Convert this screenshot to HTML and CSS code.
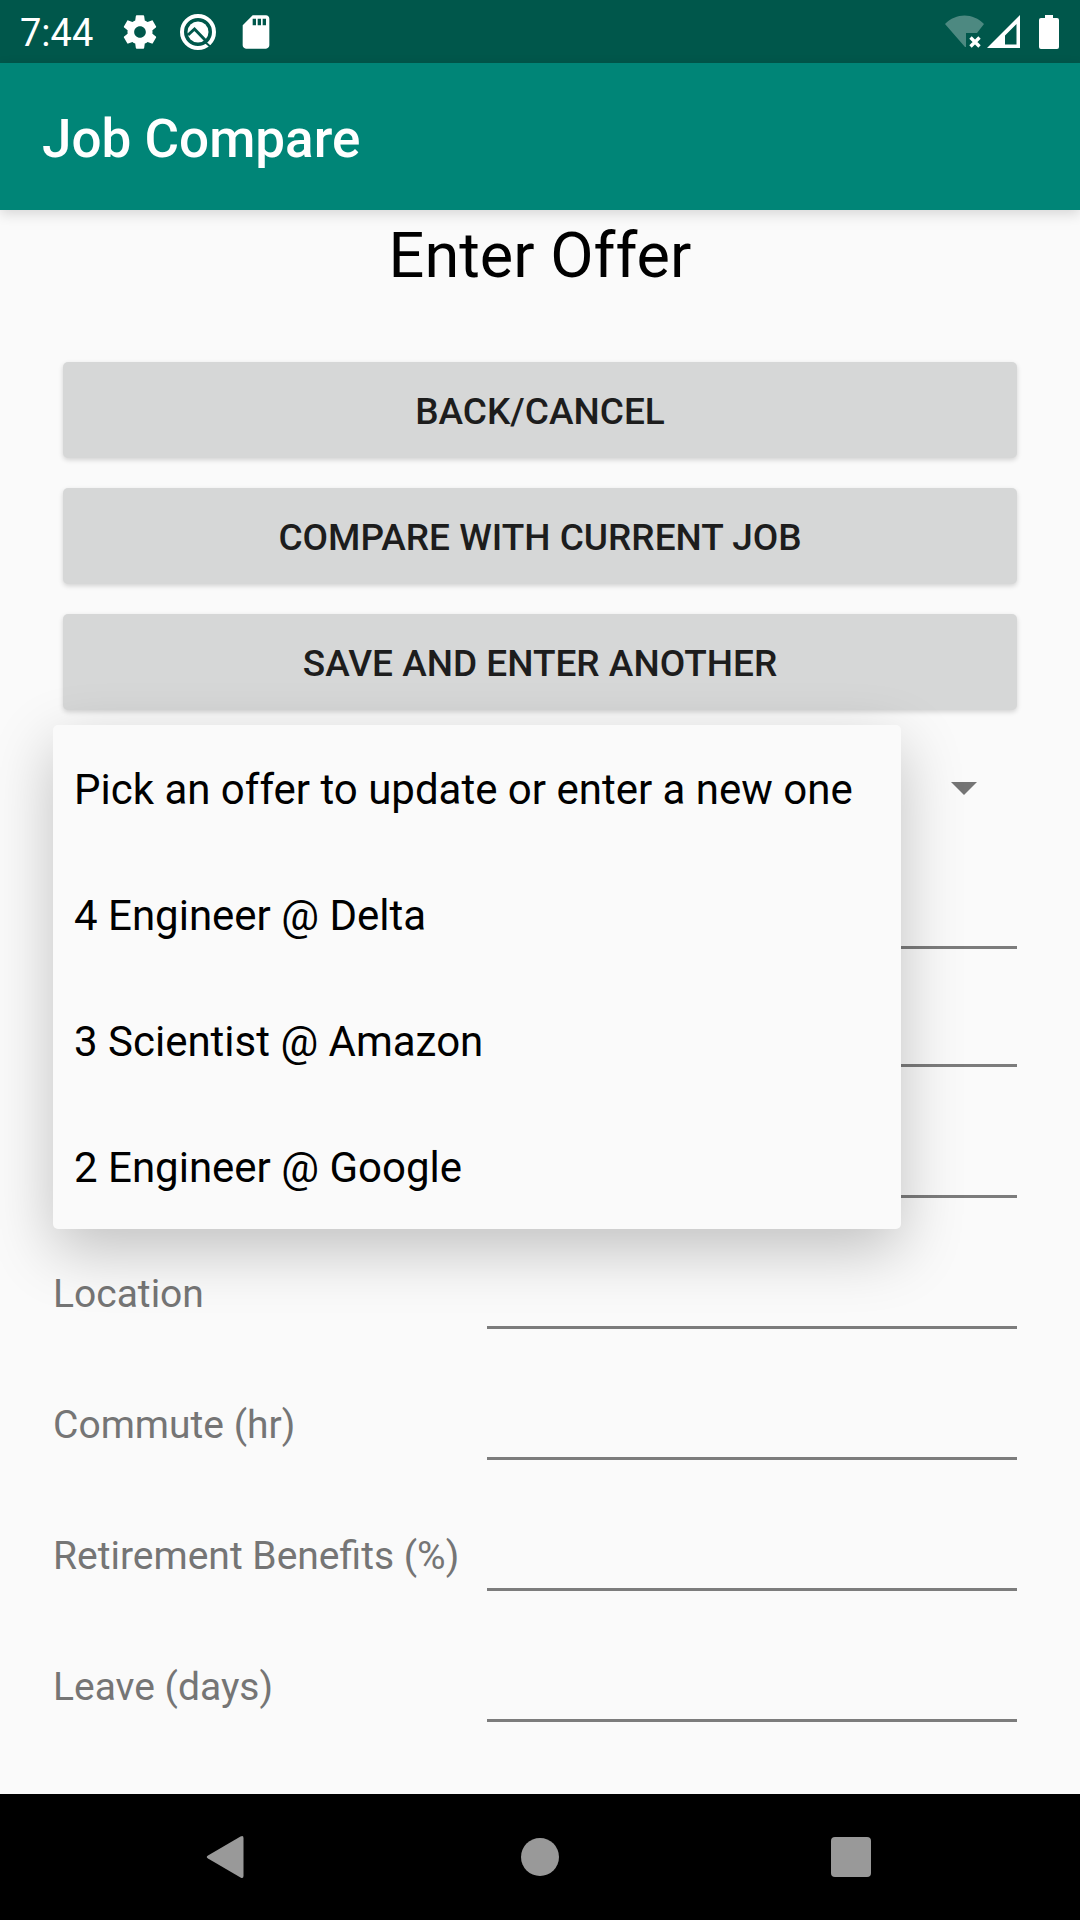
FILE: index.html
```html
<!DOCTYPE html>
<html lang="en">
<head>
<meta charset="utf-8">
<meta name="viewport" content="width=device-width, initial-scale=1">
<title>Job Compare</title>
<link rel="stylesheet" href="styles.css">
</head>
<body>
<div class="status-bar">
  <time class="status-time">7:44</time>
  <div class="status-notifications">
    <svg class="icon" viewBox="0 0 24 24" fill="currentColor" aria-hidden="true"><path d="M19.43 12.98c.04-.32.07-.64.07-.98s-.03-.66-.07-.98l2.11-1.65c.19-.15.24-.42.12-.64l-2-3.46c-.12-.22-.39-.3-.61-.22l-2.49 1c-.52-.4-1.08-.73-1.69-.98l-.38-2.65C14.46 2.18 14.25 2 14 2h-4c-.25 0-.46.18-.49.42l-.38 2.65c-.61.25-1.17.59-1.69.98l-2.49-1c-.23-.09-.49 0-.61.22l-2 3.46c-.13.22-.07.49.12.64l2.11 1.65c-.04.32-.07.65-.07.98s.03.66.07.98l-2.11 1.65c-.19.15-.24.42-.12.64l2 3.46c.12.22.39.3.61.22l2.49-1c.52.4 1.08.73 1.69.98l.38 2.65c.03.24.24.42.49.42h4c.25 0 .46-.18.49-.42l.38-2.65c.61-.25 1.17-.59 1.69-.98l2.49 1c.23.09.49 0 .61-.22l2-3.46c.12-.22.07-.49-.12-.64l-2.11-1.65zM12 15.5c-1.93 0-3.5-1.57-3.5-3.5s1.57-3.5 3.5-3.5 3.5 1.57 3.5 3.5-1.57 3.5-3.5 3.5z"/></svg>
    <svg class="icon" viewBox="0 0 40 40" fill="none" aria-hidden="true"><circle cx="20" cy="20" r="16" stroke="currentColor" stroke-width="4"/><circle cx="20" cy="20" r="10.500" fill="currentColor"/><path class="icon-cut" d="m10 23 6.500-6L29 30" stroke-width="3"/><path class="icon-cut" d="m27 30 8 7" stroke-width="2"/></svg>
    <svg class="icon" viewBox="0 0 24 24" fill="currentColor" aria-hidden="true"><path d="M18 2h-8L4.02 8 4 20c0 1.1.9 2 2 2h12c1.1 0 2-.9 2-2V4c0-1.1-.9-2-2-2zm-6 6h-2V4h2v4zm3 0h-2V4h2v4zm3 0h-2V4h2v4z"/></svg>
  </div>
  <div class="status-system">
    <svg class="icon" viewBox="0 0 40 40" aria-hidden="true"><path d="M0 12C11 .5 28 .5 39 12L32 21H21v14h-1z" fill="currentColor" opacity=".3"/><path d="m25.500 25.500 9 9m0-9-9 9" stroke="currentColor" stroke-width="3.400" fill="none"/></svg>
    <svg class="icon" viewBox="0 0 40 40" fill="currentColor" fill-rule="evenodd" aria-hidden="true"><path d="M0 36 33 3v33zM18 32.500h11.500V12L18 23.500z"/></svg>
    <svg class="icon" viewBox="0 0 40 40" fill="currentColor" aria-hidden="true"><path d="M16 3h8v3h4q2 0 2 2v27q0 2-2 2H12q-2 0-2-2V8q0-2 2-2h4z"/></svg>
  </div>
</div>
<header class="app-bar"><span class="app-title">Job Compare</span></header>
<main class="screen">
  <h1 class="screen-title">Enter Offer</h1>
  <div class="actions">
    <button class="action" type="button">BACK/CANCEL</button>
    <button class="action" type="button">COMPARE WITH CURRENT JOB</button>
    <button class="action" type="button">SAVE AND ENTER ANOTHER</button>
  </div>
  <div class="spinner">
    <select class="spinner-select" aria-label="Offer"></select>
    <svg class="spinner-arrow" viewBox="0 0 26 13" aria-hidden="true"><path d="M0 0h26L13 13z" fill="currentColor"/></svg>
    <div class="menu" role="listbox" aria-label="Offers">
      <button class="menu-item" type="button" role="option">Pick an offer to update or enter a new one</button>
      <button class="menu-item" type="button" role="option">4 Engineer @ Delta</button>
      <button class="menu-item" type="button" role="option">3 Scientist @ Amazon</button>
      <button class="menu-item" type="button" role="option">2 Engineer @ Google</button>
    </div>
  </div>
  <form class="fields">
    <div class="field field-first"><input class="field-input" type="text" aria-label="Title"></div>
    <div class="field field-tight"><input class="field-input" type="text" aria-label="Company"></div>
    <div class="field"><input class="field-input" type="text" aria-label="Salary"></div>
    <div class="field"><label class="field-label" for="location">Location</label><input class="field-input" type="text" id="location"></div>
    <div class="field"><label class="field-label" for="commute">Commute (hr)</label><input class="field-input" type="text" id="commute"></div>
    <div class="field"><label class="field-label" for="retirement">Retirement Benefits (%)</label><input class="field-input" type="text" id="retirement"></div>
    <div class="field"><label class="field-label" for="leave">Leave (days)</label><input class="field-input" type="text" id="leave"></div>
  </form>
</main>
<nav class="nav-bar" aria-label="System">
  <button class="nav-button" type="button" aria-label="Back"><svg class="nav-icon" viewBox="0 0 48 48" fill="currentColor" aria-hidden="true"><path d="M3 22.500 35.500 3.500q3-1.500 3 1.500v38q0 3-3 1.500L3 25.500q-2.500-1.500 0-3z"/></svg></button>
  <button class="nav-button" type="button" aria-label="Home"><svg class="nav-icon" viewBox="0 0 48 48" fill="currentColor" aria-hidden="true"><circle cx="24" cy="24" r="19"/></svg></button>
  <button class="nav-button" type="button" aria-label="Recent apps"><svg class="nav-icon" viewBox="0 0 48 48" fill="currentColor" aria-hidden="true"><rect x="4" y="4" width="40" height="40" rx="4"/></svg></button>
</nav>
</body>
</html>
```
FILE: styles.css
```css
* {
  box-sizing: border-box;
}

body {
  display: flex;
  flex-direction: column;
  min-height: 100vh;
  margin: 0;
  background: #fafafa;
  color: #000;
  font-family: Roboto, "Liberation Sans", sans-serif;
}

button,
input,
select {
  margin: 0;
  padding: 0;
  border: 0;
  border-radius: 0;
  background: none;
  font: inherit;
}

/* System status bar */
.status-bar {
  display: flex;
  align-items: center;
  height: 63px;
  padding: 0 11px 0 20px;
  background: #00574b;
  color: #fff;
}

.status-time {
  padding-top: 2px;
  font-size: 38px;
  line-height: 44px;
}

.status-notifications {
  display: flex;
  gap: 18px;
  margin-left: 27px;
}

.status-system {
  display: flex;
  gap: 2px;
  margin-left: auto;
}

.icon {
  display: block;
  width: 40px;
  height: 40px;
}

.icon-cut {
  stroke: #00574b;
}

/* App bar */
.app-bar {
  display: flex;
  align-items: center;
  height: 147px;
  padding: 4px 42px 0;
  background: #008577;
  color: #fff;
  box-shadow: 0 4px 12px rgba(0, 0, 0, 0.14);
}

.app-title {
  font-size: 53px;
  font-weight: 500;
  line-height: 62px;
}

/* Screen content */
.screen {
  flex: 1;
  padding: 0 53px;
}

.screen-title {
  margin: 0 0 60px;
  font-size: 63px;
  font-weight: 400;
  line-height: 92px;
  text-align: center;
}

.actions {
  display: grid;
  gap: 30px;
  padding: 0 10px 15px;
}

.action {
  height: 96px;
  padding-top: 2px;
  border-radius: 5px;
  background: #d6d7d7;
  box-shadow: 0 2px 5px rgba(0, 0, 0, 0.16);
  color: #1d1d1d;
  font-size: 37px;
  font-weight: 500;
}

/* Offer drop-down */
.spinner {
  position: relative;
  display: flex;
  align-items: center;
  height: 126px;
}

.spinner-select {
  flex: 1;
  align-self: stretch;
  appearance: none;
}

.spinner-arrow {
  width: 26px;
  height: 13px;
  margin-right: 50px;
  color: #757575;
}

.menu {
  position: absolute;
  top: 0;
  right: 126px;
  left: 0;
  z-index: 1;
  display: grid;
  border-radius: 5px;
  background: #fafafa;
  box-shadow: 0 21px 63px rgba(0, 0, 0, 0.23);
}

.menu-item {
  height: 126px;
  padding: 2px 21px 0;
  color: #000;
  font-size: 42px;
  text-align: left;
}

/* Offer details */
.field {
  display: grid;
  grid-template-columns: 434px 1fr;
  align-items: center;
  padding: 43px 10px 16px 0;
}

.field-first {
  padding-top: 26px;
}

.field-tight {
  padding-top: 30px;
}

.field-label {
  padding-top: 2px;
  color: #757575;
  font-size: 39px;
  line-height: 46px;
}

.field-input {
  grid-column: 2;
  width: 100%;
  height: 72px;
  border-bottom: 3px solid #7c7c7c;
  font-size: 42px;
}

/* System navigation bar */
.nav-bar {
  display: flex;
  justify-content: space-between;
  align-items: center;
  height: 126px;
  padding: 0 205px;
  background: #000;
}

.nav-button {
  color: #999;
}

.nav-icon {
  display: block;
  width: 48px;
  height: 48px;
}
```
